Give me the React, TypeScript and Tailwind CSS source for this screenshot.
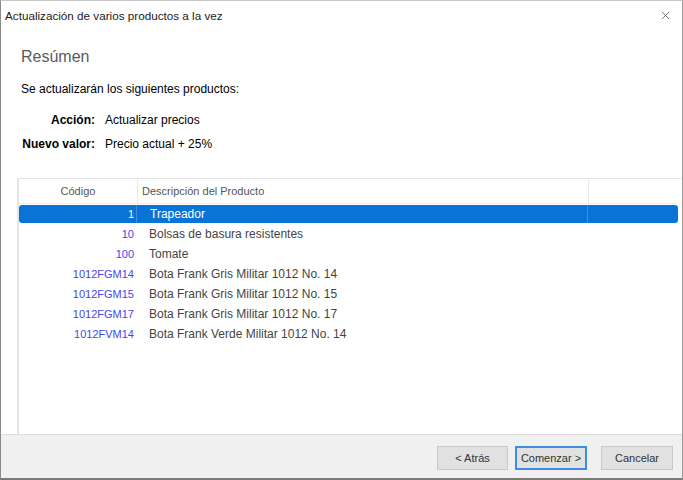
import { X } from 'lucide-react'

const rows = [
  { code: '1', desc: 'Trapeador' },
  { code: '10', desc: 'Bolsas de basura resistentes' },
  { code: '100', desc: 'Tomate' },
  { code: '1012FGM14', desc: 'Bota Frank Gris Militar 1012 No. 14' },
  { code: '1012FGM15', desc: 'Bota Frank Gris Militar 1012 No. 15' },
  { code: '1012FGM17', desc: 'Bota Frank Gris Militar 1012 No. 17' },
  { code: '1012FVM14', desc: 'Bota Frank Verde Militar 1012 No. 14' },
]

export default function App() {
  return (
    <div className="w-[683px] h-[480px] overflow-hidden bg-white font-['Liberation_Sans',Arial,sans-serif] text-[12px] text-black">
      <div className="h-full flex flex-col border border-[#8a8a8a] border-t-[#c8c8c8] border-r-[#9a9a9a] border-b-2 border-b-[#7a7a7a]">
        {/* Title bar */}
        <div className="h-[29px] flex items-center justify-between pl-[4px] pr-[10px] shrink-0">
          <span className="text-[11.7px] text-[#222]">Actualización de varios productos a la vez</span>
          <X className="w-[13px] h-[13px] text-[#333]" strokeWidth={1.2} />
        </div>

        {/* Content */}
        <div className="flex-1 flex flex-col min-h-0">
          <div className="pl-[20px] pt-[17px] text-[16px] leading-[20px] text-[#5a5a5a]">Resúmen</div>
          <div className="pl-[20px] pt-[14px] leading-[16px]">Se actualizarán los siguientes productos:</div>
          <div className="grid grid-cols-[77px_1fr] gap-x-[10px] gap-y-[8px] pl-[17px] pt-[15px] leading-[16px]">
            <span className="font-bold text-right">Acción:</span>
            <span>Actualizar precios</span>
            <span className="font-bold text-right">Nuevo valor:</span>
            <span>Precio actual + 25%</span>
          </div>

          {/* List */}
          <div className="ml-[16px] mt-[26px] flex-1 min-h-0 border-l-2 border-t border-[#e4e4e4] flex flex-col text-[11px]">
            <div className="h-[25px] flex items-center border-b border-[#f0f0f0] shrink-0">
              <div className="w-[119px] text-center text-[#555] border-r border-[#e8e8e8] h-full flex items-center justify-center">Código</div>
              <div className="w-[451px] pl-[4px] text-[#555] border-r border-[#e8e8e8] h-full flex items-center">Descripción del Producto</div>
              <div className="flex-1" />
            </div>
            <div className="flex flex-col">
              {rows.map((r, i) => (
                <div key={r.code} className="h-[20px] flex items-center">
                  <div
                    className={`h-[18px] flex-1 flex items-center ${i === 0 ? 'bg-[#0a74d6] rounded-[3px] mr-[4px]' : ''}`}
                  >
                    <div className={`w-[117px] pr-[2px] text-right ${i === 0 ? 'text-white' : 'text-[#4545e8]'}`}>{r.code}</div>
                    <div className={`w-[451px] pl-[13px] h-full flex items-center text-[12px] ${i === 0 ? 'border-l border-[#3a8fe0] text-white' : 'text-[#444]'}`}>{r.desc}</div>
                    <div className={`flex-1 h-full ${i === 0 ? 'border-l border-[#3a8fe0]' : ''}`} />
                  </div>
                </div>
              ))}
            </div>
          </div>
        </div>

        {/* Footer */}
        <div className="h-[44px] shrink-0 bg-[#f0f0f0] border-t border-[#dcdcdc] flex items-start justify-end gap-[7px] pr-[9px] pt-[11px]">
          <button className="w-[71px] h-[24px] bg-[#e1e1e1] border border-[#c9c9c9] text-[11px] text-[#333]">&lt; Atrás</button>
          <button className="w-[72px] h-[24px] bg-[#e1e1e1] border-2 border-[#3c8ee0] text-[11px] text-[#333]">Comenzar &gt;</button>
          <button className="w-[72px] h-[24px] ml-[7px] bg-[#e1e1e1] border border-[#c9c9c9] text-[11px] text-[#333]">Cancelar</button>
        </div>
      </div>
    </div>
  )
}
